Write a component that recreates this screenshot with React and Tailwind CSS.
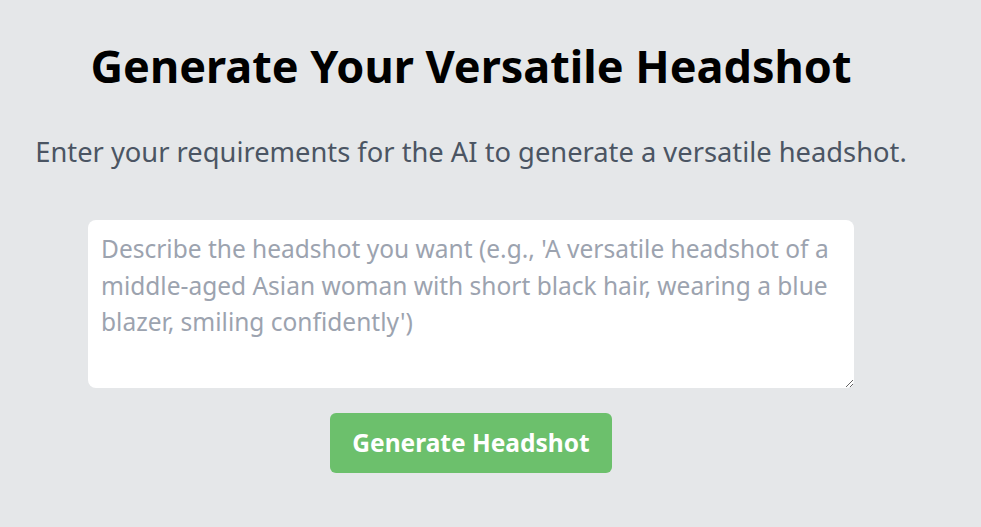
import React from "react";

const App = () => {
  return (
    <div className="min-h-screen bg-[#e5e7e9] font-['Noto_Sans',sans-serif]">
      <div className="w-[942px] flex flex-col items-center pt-[34px]">
        <h1 className="text-[45px] leading-[64px] font-bold text-black">
          Generate Your Versatile Headshot
        </h1>

        <p className="mt-[38px] text-[27.3px] leading-[32px] text-[#4b5563]">
          Enter your requirements for the AI to generate a versatile headshot.
        </p>

        <textarea
          className="mt-[52px] w-[766px] h-[168px] bg-white rounded-lg px-[13px] py-[11px] text-[24.5px] leading-[36.5px] text-gray-800 placeholder:text-[#9ca3af] outline-none"
          placeholder="Describe the headshot you want (e.g., 'A versatile headshot of a middle-aged Asian woman with short black hair, wearing a blue blazer, smiling confidently')"
        />

        <button className="mt-[25px] w-[282px] h-[60px] bg-[#6cc06c] rounded-md text-white text-[24.5px] font-bold">
          Generate Headshot
        </button>
      </div>
    </div>
  );
};

export default App;
